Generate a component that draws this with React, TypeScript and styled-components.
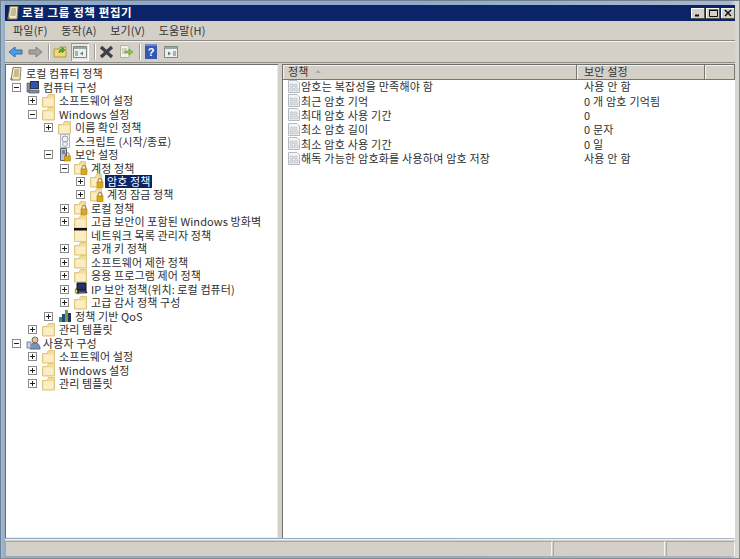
import React from 'react';
import styled, { createGlobalStyle } from 'styled-components';

const Global = createGlobalStyle`
  html, body { margin: 0; padding: 0; height: 100%; overflow: hidden; }
  body { background: #b4c6da; font-family: "Noto Sans CJK KR", "Liberation Sans", sans-serif; font-size: 11px; color: #2f2f2f; }
  #root { height: 100%; }
`;

const Frame = styled.div`
  width: 740px; height: 559px; box-sizing: border-box;
  padding: 5px 5px 3px 5px;
  background: linear-gradient(90deg, #a8c0da 0, #8eaac8 5px, #8eaac8 400px, #aab8c8 730px, #d8d7d2 736px);
  box-shadow: inset 1px 1px #6f7f92, inset -1px -1px #8c8c8c;
  display: flex; flex-direction: column;
`;
const TitleBar = styled.div`
  height: 16px; flex: none; display: flex; align-items: center; gap: 3px;
  padding: 0 0 0 1px;
  background: #0b2468; color: #fff; font-weight: 700; font-size: 11.5px; letter-spacing: 0.6px;
`;
const TitleText = styled.span` flex: 1; line-height: 14px; padding-bottom: 2px; `;
const WinButtons = styled.div` display: flex; gap: 1px; `;
const WinButton = styled.div`
  width: 14px; height: 11px; background: #d4d0c8; display: flex; align-items: center; justify-content: center;
  box-shadow: inset -1px -1px #555, inset 1px 1px #fff;
`;
const MenuBar = styled.div`
  height: 20px; flex: none; display: flex; align-items: center; gap: 13.5px; padding: 0 0 1px 8px;
  background: #d4d0c8; border-bottom: 1px solid #8f8d88; box-sizing: border-box; letter-spacing: 0.2px; color: #333;
`;
const Toolbar = styled.div`
  height: 22px; flex: none; display: flex; align-items: center; padding: 0 0 1px 0;
  background: #d4d0c8; border-top: 1px solid #f4f3f0; border-bottom: 1px solid #8f8d88; box-sizing: border-box;
`;
const ToolIcon = styled.div<{ $pressed?: boolean }>`
  width: ${p => p.$pressed ? 18 : 20}px; height: 18px; display: flex; align-items: center; justify-content: center; flex: none;
  ${p => p.$pressed ? 'margin-left:1px; background:#e8e6e0; box-shadow: inset 1px 1px #9a9890, inset -1px -1px #fff;' : ''}
`;
const ToolSep = styled.div<{ $before: number }>`
  width: 1px; height: 16px; background: #9d9b95; box-shadow: 1px 0 #fff; margin: 0 1px 0 ${p => p.$before}px; flex: none;
`;
const Panes = styled.div`
  flex: 1; min-height: 0; display: flex; background: #d4d0c8; padding-top: 1px;
`;
const TreePane = styled.div`
  width: 273px; flex: none; background: #fff; box-sizing: border-box;
  border-left: 1px solid #6e6e6e; border-top: 1px solid #6e6e6e; padding: 2px 0 0 0;
  box-shadow: inset -1px -1px #eeece6;
`;
const Splitter = styled.div` width: 4px; flex: none; background: #d4d0c8; `;
const ListPane = styled.div`
  flex: 1; background: #fff; border-left: 1px solid #6e6e6e; border-top: 1px solid #6e6e6e;
  display: flex; flex-direction: column; min-width: 0;
`;
const Row = styled.div<{ $indent: number }>`
  height: 13.48px; display: flex; align-items: center; padding-left: ${p => p.$indent}px; white-space: nowrap; letter-spacing: 0.1px;
`;
const ExpSlot = styled.div`
  width: 9px; height: 9px; flex: none; margin-right: 5px; display: flex;
`;
const IconSlot = styled.div`
  width: 16px; height: 13px; flex: none; display: flex; align-items: center;
`;
const Label = styled.span<{ $selected?: boolean }>`
  line-height: 13px; color: ${p => p.$selected ? '#fff' : '#2f2f2f'};
  padding: 0 ${p => p.$selected ? 2 : 1}px; margin-left: ${p => p.$selected ? -1 : 0}px;
  background: ${p => p.$selected ? '#0b2468' : 'transparent'};
`;
const Header = styled.div`
  height: 15px; flex: none; display: flex; background: #d4d0c8; border-bottom: 1px solid #777; box-sizing: border-box; letter-spacing: 0.2px; color:#333;
`;
const HeadCell = styled.div<{ $w?: number; $pad?: number }>`
  ${p => p.$w ? `width:${p.$w}px; flex:none;` : 'flex:1;'}
  box-sizing: border-box; padding: 0 0 1px ${p => p.$pad ?? 4}px; display: flex; align-items: center; gap: 6px;
  border-right: 1px solid #77756f; box-shadow: inset 1px 1px #f4f3f0; line-height: 13px;
`;
const SortArrow = styled.span`
  width: 0; height: 0; border-left: 3px solid transparent; border-right: 3px solid transparent; border-bottom: 3px solid #aaa;
`;
const ListRow = styled.div`
  height: 14.4px; box-sizing: border-box; padding-bottom: 2px; display: flex; align-items: center; letter-spacing: 0.22px; color: #2f2f2f; white-space: nowrap;
`;
const NameCell = styled.div`
  width: 295px; flex: none; display: flex; align-items: center; padding-left: 4px; box-sizing: border-box;
`;
const ValueCell = styled.div` padding-left: 6px; line-height: 12px; `;
const StatusBar = styled.div`
  height: 17px; flex: none; display: flex; gap: 1px; background: #d4d0c8; border-top: 1px solid #f2f1ec; margin-top: 1px; box-sizing: border-box; padding-top: 1px;
`;
const StatusCell = styled.div<{ $w: number }>`
  width: ${p => p.$w}px; flex: none; box-sizing: border-box; border-top: 1px solid #a9a7a0; border-left: 1px solid #a9a7a0; border-right: 1px solid #f6f5f1;
`;

const Exp = ({ open }: { open: boolean }) => (
  <svg width="9" height="9" viewBox="0 0 9 9">
    <rect x=".5" y=".5" width="8" height="8" fill="#fff" stroke="#8a8a8a" />
    <path d={open ? 'M2 4.5h5' : 'M2 4.5h5M4.5 2v5'} stroke="#222" />
  </svg>
);
const Folder = () => (
  <svg width="14" height="14" viewBox="0 0 14 14">
    <path d="M.5 3.5V13H12.5V.5H6.5L5 3.5Z" fill="#f3dc9a" stroke="#e0c67e" />
    <path d="M1.5 4.5H11.5V12H1.5Z" fill="#fbeec4" />
  </svg>
);
const LockFolder = () => (
  <svg width="14" height="14" viewBox="0 0 14 14">
    <path d="M.5 3.5V13H11.5V.5H6.5L5 3.5Z" fill="#f3dc9a" stroke="#e0c67e" />
    <path d="M1.5 4.5H10.5V12H1.5Z" fill="#fbeec4" />
    <path d="M8 8V6.5a2 2 0 0 1 4 0V8" fill="none" stroke="#8a7a45" />
    <rect x="7" y="8" width="6" height="5.5" fill="#e0a818" stroke="#a87c10" strokeWidth=".6" />
  </svg>
);
const BlackFolder = () => (
  <svg width="14" height="14" viewBox="0 0 14 14">
    <path d="M.5 1.5H12.5V13.5H.5Z" fill="#fbeec4" stroke="#e0c67e" />
    <path d="M0 0H13V2.5H0Z" fill="#111" />
  </svg>
);
const ScrollIcon = () => (
  <svg width="13" height="14" viewBox="0 0 13 14">
    <path d="M4 .5H12L11 13H2Z" fill="#f2e8c4" stroke="#8d8058" />
    <path d="M5.5 3H10M5 5H10M5 7H10M4.5 9H9.5" stroke="#9a8c60" />
    <path d="M1 12.5c1-1 2-1 3 0" fill="none" stroke="#7a6e4a" />
  </svg>
);
const Computer = () => (
  <svg width="14" height="13" viewBox="0 0 14 13">
    <rect x="4.5" y=".5" width="8" height="7" fill="#2e55b5" stroke="#333" />
    <path d="M1 2h3v9H1z" fill="#8592ab" stroke="#444" strokeWidth=".6" />
    <path d="M3 9h10v3H3z" fill="#7e8ea8" stroke="#3d4a60" strokeWidth=".6" />
  </svg>
);
const UserIcon = () => (
  <svg width="15" height="14" viewBox="0 0 15 14">
    <circle cx="9" cy="4" r="3" fill="#e2c29a" stroke="#7a6a58" />
    <path d="M4 13c0-4 2-6 5-6s5 2 5 6Z" fill="#7c93ba" stroke="#566a8e" />
    <rect x="1" y="6" width="4" height="6" fill="#c8d3e2" stroke="#7a8aa0" />
  </svg>
);
const ScriptIcon = () => (
  <svg width="14" height="14" viewBox="0 0 14 14">
    <path d="M2.5.5H11.5V13.5H2.5Z" fill="#f4f4f4" stroke="#b5b5b5" />
    <circle cx="7" cy="5" r="3" fill="none" stroke="#8e9bb0" />
    <circle cx="7" cy="10" r="2.4" fill="none" stroke="#a8a8a8" />
  </svg>
);
const SecurityIcon = () => (
  <svg width="14" height="14" viewBox="0 0 14 14">
    <path d="M2.5.5H8.5V12.5H2.5Z" fill="#b9c4d6" stroke="#5a6478" />
    <path d="M4 3H7M4 5H7" stroke="#39445a" />
    <path d="M7.5 8V6.5a1.8 1.8 0 0 1 3.6 0V8" fill="none" stroke="#7a6a30" />
    <rect x="6.5" y="8" width="6" height="5" fill="#e0a818" stroke="#a87c10" strokeWidth=".6" />
  </svg>
);
const IpIcon = () => (
  <svg width="14" height="14" viewBox="0 0 14 14">
    <circle cx="4" cy="9" r="3" fill="#e8dc70" stroke="#a09030" />
    <path d="M3 1h9v7H3z" fill="#29316a" stroke="#111" />
    <path d="M4 8l-1 3h10l-1-3z" fill="#3b4150" stroke="#111" strokeWidth=".6" />
    <path d="M5 11h6" stroke="#7b93c9" />
  </svg>
);
const QosIcon = () => (
  <svg width="15" height="14" viewBox="0 0 15 14">
    <path d="M1 8h3v5H1z" fill="#3a9a4a" />
    <path d="M4 5h3v8H4z" fill="#1f4a86" />
    <path d="M7 1h3v12H7z" fill="#6ca04a" />
    <path d="M10 4h3v9h-3z" fill="#2a2f5e" />
  </svg>
);
const PolicyIcon = () => (
  <svg width="14" height="13" viewBox="0 0 14 13">
    <path d="M1.5.5H10L12.5 3V12.5H1.5Z" fill="#f5f5f5" stroke="#b6bbc2" />
    <path d="M3 4H6V7H3ZM7 4H10V7H7ZM3 8H6V11H3ZM7 8H11V11H7Z" fill="#dde2e8" stroke="#b0b6bf" strokeWidth=".5" />
  </svg>
);

const iconMap = {
  folder: Folder,
  lock: LockFolder,
  black: BlackFolder,
  script: ScriptIcon,
  security: SecurityIcon,
  ip: IpIcon,
  qos: QosIcon,
  computer: Computer,
  user: UserIcon,
} as const;

type TreeNode = { label: string; level: number; icon: keyof typeof iconMap; exp?: 'open' | 'closed'; selected?: boolean };

const tree: TreeNode[] = [
  { label: '컴퓨터 구성', level: 0, icon: 'computer', exp: 'open' },
  { label: '소프트웨어 설정', level: 1, icon: 'folder', exp: 'closed' },
  { label: 'Windows 설정', level: 1, icon: 'folder', exp: 'open' },
  { label: '이름 확인 정책', level: 2, icon: 'folder', exp: 'closed' },
  { label: '스크립트 (시작/종료)', level: 2, icon: 'script' },
  { label: '보안 설정', level: 2, icon: 'security', exp: 'open' },
  { label: '계정 정책', level: 3, icon: 'lock', exp: 'open' },
  { label: '암호 정책', level: 4, icon: 'lock', exp: 'closed', selected: true },
  { label: '계정 잠금 정책', level: 4, icon: 'lock', exp: 'closed' },
  { label: '로컬 정책', level: 3, icon: 'lock', exp: 'closed' },
  { label: '고급 보안이 포함된 Windows 방화벽', level: 3, icon: 'folder', exp: 'closed' },
  { label: '네트워크 목록 관리자 정책', level: 3, icon: 'black' },
  { label: '공개 키 정책', level: 3, icon: 'folder', exp: 'closed' },
  { label: '소프트웨어 제한 정책', level: 3, icon: 'folder', exp: 'closed' },
  { label: '응용 프로그램 제어 정책', level: 3, icon: 'folder', exp: 'closed' },
  { label: 'IP 보안 정책(위치: 로컬 컴퓨터)', level: 3, icon: 'ip', exp: 'closed' },
  { label: '고급 감사 정책 구성', level: 3, icon: 'folder', exp: 'closed' },
  { label: '정책 기반 QoS', level: 2, icon: 'qos', exp: 'closed' },
  { label: '관리 템플릿', level: 1, icon: 'folder', exp: 'closed' },
  { label: '사용자 구성', level: 0, icon: 'user', exp: 'open' },
  { label: '소프트웨어 설정', level: 1, icon: 'folder', exp: 'closed' },
  { label: 'Windows 설정', level: 1, icon: 'folder', exp: 'closed' },
  { label: '관리 템플릿', level: 1, icon: 'folder', exp: 'closed' },
];

const policies = [
  ['암호는 복잡성을 만족해야 함', '사용 안 함'],
  ['최근 암호 기억', '0 개 암호 기억됨'],
  ['최대 암호 사용 기간', '0'],
  ['최소 암호 길이', '0 문자'],
  ['최소 암호 사용 기간', '0 일'],
  ['해독 가능한 암호화를 사용하여 암호 저장', '사용 안 함'],
];

export default function App() {
  return (
    <Frame>
      <Global />
      <TitleBar>
        <ScrollIcon />
        <TitleText>로컬 그룹 정책 편집기</TitleText>
        <WinButtons>
          <WinButton><svg width="8" height="8"><path d="M1 6.5h4" stroke="#111" strokeWidth="2" /></svg></WinButton>
          <WinButton><svg width="9" height="8"><path d="M.5 1.5h8v6h-8z" fill="none" stroke="#111" /><path d="M0 1h9" stroke="#111" /></svg></WinButton>
          <WinButton><svg width="8" height="8"><path d="M1 1l6 6M7 1l-6 6" stroke="#111" strokeWidth="1.5" /></svg></WinButton>
        </WinButtons>
      </TitleBar>
      <MenuBar>
        <span>파일(F)</span><span>동작(A)</span><span>보기(V)</span><span>도움말(H)</span>
      </MenuBar>
      <Toolbar>
        <ToolIcon>
          <svg width="15" height="12" viewBox="0 0 15 12"><path d="M1 6l6-5v3h7v4H7v3z" fill="#4d9fe0" stroke="#2d6eb0" /></svg>
        </ToolIcon>
        <ToolIcon>
          <svg width="15" height="12" viewBox="0 0 15 12"><path d="M14 6L8 1v3H1v4h7v3z" fill="#a3a3a0" stroke="#80807c" /></svg>
        </ToolIcon>
        <ToolSep $before={3} />
        <ToolIcon>
          <svg width="15" height="13" viewBox="0 0 15 13"><path d="M1 4V12H13V2H7L6 4Z" fill="#f2d878" stroke="#b59a40" /><path d="M6 8c0-3 1-4 3-4V2l3 3-3 3V6c-1 0-2 1-3 2Z" fill="#4fa93f" stroke="#2e7a25" strokeWidth=".6" /></svg>
        </ToolIcon>
        <ToolIcon $pressed>
          <svg width="14" height="12" viewBox="0 0 14 12"><path d="M.5.5H13.5V11.5H.5Z" fill="#eef0ee" stroke="#7d8a84" /><path d="M1 1h12v2H1z" fill="#9aa6a0" /><path d="M2 5h3v5H2z" fill="#9fb2c2" /><path d="M10 5.5l-3 2 3 2z" fill="#5a7a8a" /></svg>
        </ToolIcon>
        <ToolSep $before={5} />
        <ToolIcon>
          <svg width="15" height="14" viewBox="0 0 15 14"><path d="M2 2l11 10M13 2L2 12" stroke="#3c3f44" strokeWidth="3.2" /></svg>
        </ToolIcon>
        <ToolIcon>
          <svg width="15" height="13" viewBox="0 0 15 13"><path d="M1.5.5H8L10 2.5V12.5H1.5Z" fill="#f3f2e8" stroke="#b0aea0" /><path d="M3 4h5M3 6h4M3 8h4" stroke="#b0aea0" /><path d="M6 6h4V4l4 3-4 3V8H6z" fill="#8dc63f" stroke="#5f9a25" strokeWidth=".6" /></svg>
        </ToolIcon>
        <ToolSep $before={3} />
        <ToolIcon>
          <svg width="12" height="15" viewBox="0 0 12 15"><rect width="12" height="15" fill="#3658b0" /><path d="M0 0h12v2H0z" fill="#6e88cc" /><text x="6" y="12" textAnchor="middle" fill="#fff" fontSize="11" fontWeight="700" fontFamily="Liberation Sans">?</text></svg>
        </ToolIcon>
        <ToolIcon>
          <svg width="14" height="12" viewBox="0 0 14 12"><path d="M.5.5H13.5V11.5H.5Z" fill="#eef0ee" stroke="#7d8a84" /><path d="M1 1h12v2H1z" fill="#9aa6a0" /><path d="M9 5h3v5H9z" fill="#9fb2c2" /><path d="M4 5.5l3 2-3 2z" fill="#5a7a8a" /></svg>
        </ToolIcon>
      </Toolbar>
      <Panes>
        <TreePane>
          <Row $indent={3}>
            <IconSlot><ScrollIcon /></IconSlot>
            <Label>로컬 컴퓨터 정책</Label>
          </Row>
          {tree.map((n, i) => {
            const Icon = iconMap[n.icon];
            return (
              <Row key={i} $indent={6 + n.level * 16}>
                <ExpSlot>{n.exp && <Exp open={n.exp === 'open'} />}</ExpSlot>
                <IconSlot><Icon /></IconSlot>
                <Label $selected={n.selected}>{n.label}</Label>
              </Row>
            );
          })}
        </TreePane>
        <Splitter />
        <ListPane>
          <Header>
            <HeadCell $w={294} $pad={5}>정책 <SortArrow /></HeadCell>
            <HeadCell $w={128} $pad={7}>보안 설정</HeadCell>
            <HeadCell />
          </Header>
          <div>
            {policies.map(([name, value]) => (
              <ListRow key={name}>
                <NameCell><PolicyIcon /><span>{name}</span></NameCell>
                <ValueCell>{value}</ValueCell>
              </ListRow>
            ))}
          </div>
        </ListPane>
      </Panes>
      <StatusBar>
        <StatusCell $w={547} />
        <StatusCell $w={112} />
        <StatusCell $w={69} />
      </StatusBar>
    </Frame>
  );
}
